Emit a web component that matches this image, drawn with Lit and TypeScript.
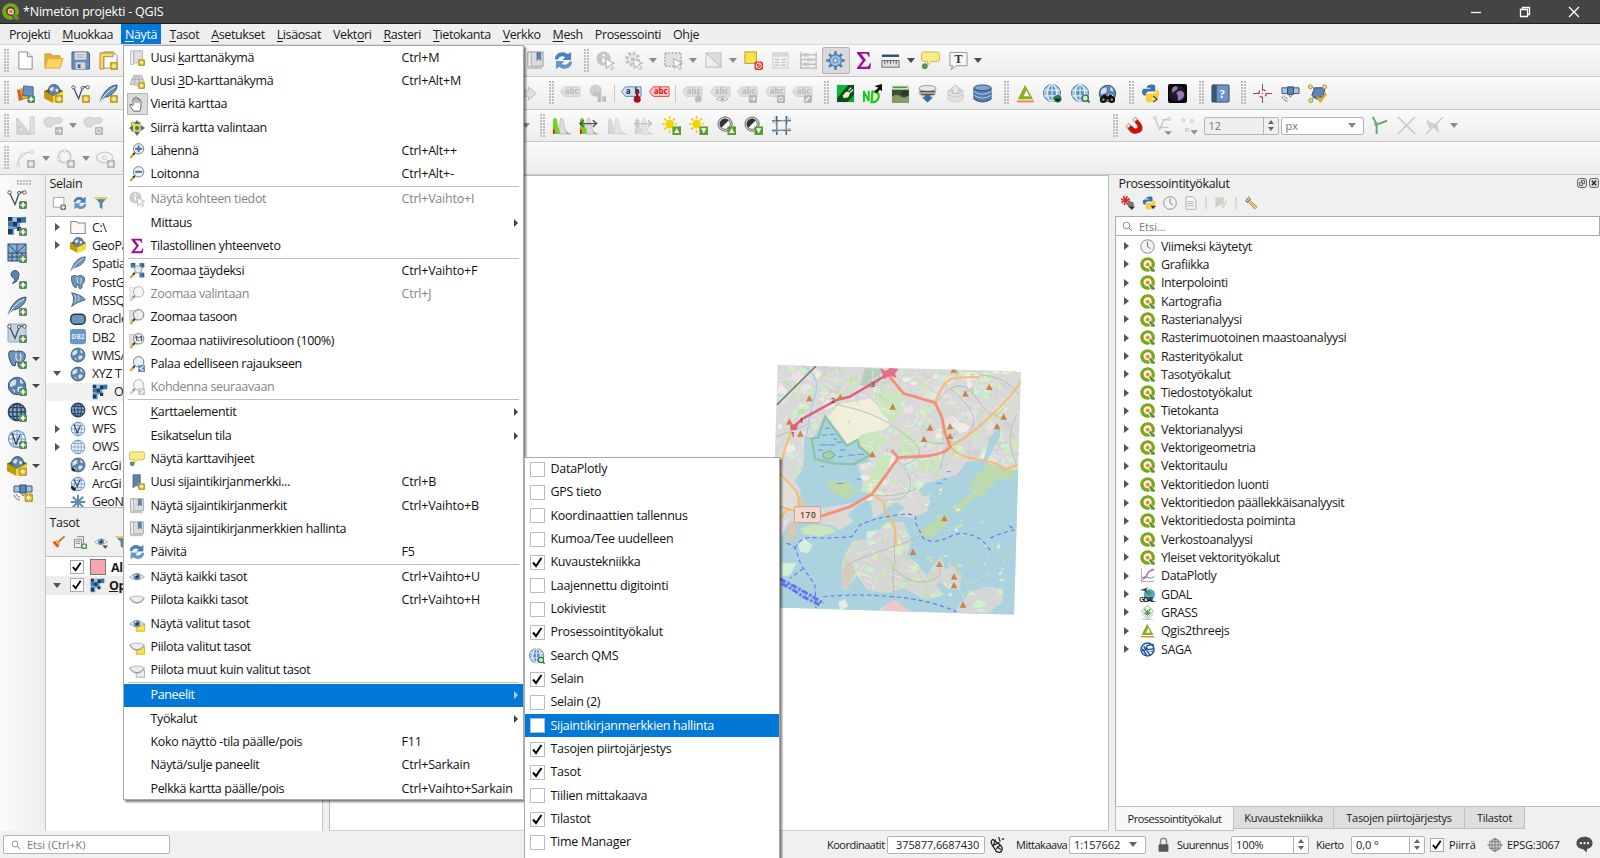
import { LitElement, html, svg, css, nothing } from "lit";
import { customElement, property } from "lit/decorators.js";
import { classMap } from "lit/directives/class-map.js";

/* ---------- shared icon fragments (20x20 grid) ---------- */
const plus = svg`<rect x="12" y="12" width="8" height="8" rx="1.5" fill="#5a8c5a"/><path d="M16 13.500v5M13.500 16h5" stroke="#fff" stroke-width="1.700"/>`;
const star = svg`<rect x="11.500" y="11.500" width="8.500" height="8.500" rx="1.500" fill="#c4a017"/><path d="M15.750 12.800v6M12.800 15.800h6M13.700 13.700l4.100 4.100M17.800 13.700l-4.100 4.100" stroke="#fff8d0" stroke-width="1"/>`;
const grayBadge = svg`<rect x="11.500" y="11.500" width="8.500" height="8.500" rx="1.200" fill="#8d8d8d"/>`;
const grayStar = svg`${grayBadge}<path d="M15.750 12.800v6M12.800 15.800h6M13.700 13.700l4.100 4.100M17.800 13.700l-4.100 4.100" stroke="#fff" stroke-width="1"/>`;
const drop = svg`<path d="M12 15h8l-4 4.500z" fill="#444"/>`;
const globeDark = svg`<circle cx="10" cy="10" r="8.700" fill="#5d83ad" stroke="#3a5878" stroke-width="1"/><path d="M3 7c2-3 5-4 6-3s-1 2 0 3-2 3-3 3-2 2-3 0zM11 11c2-1 5 0 5 1s-2 4-4 4-2-3-1-5zM13 3c2 1 3 3 3 5l-3-1zM5 13l3 1v3z" fill="#d5e2ee"/>`;
const globeGrid = svg`<circle cx="10" cy="10" r="8.500" fill="#eef4fa" stroke="#6b96c6" stroke-width="1.200"/><path d="M10 1.500v17M1.500 10h17M3 5.600h14M3 14.400h14" stroke="#6b96c6" stroke-width=".9"/><ellipse cx="10" cy="10" rx="4.400" ry="8.500" fill="none" stroke="#6b96c6" stroke-width=".9"/>`;
const globeNavy = svg`<circle cx="10" cy="10" r="8.500" fill="#87a9cc" stroke="#2a4664" stroke-width="1.600"/><path d="M10 1.500v17M1.500 10h17M3 5.600h14M3 14.400h14" stroke="#2a4664" stroke-width="1.400"/><ellipse cx="10" cy="10" rx="4.400" ry="8.500" fill="none" stroke="#2a4664" stroke-width="1.400"/>`;
const globeQms = svg`<circle cx="9.500" cy="9.500" r="9" fill="#a9c5de" stroke="#4f7ba8"/><ellipse cx="9.500" cy="9.500" rx="4.800" ry="8.800" fill="#5f92c6" stroke="#e9f1f8" stroke-width="1.400"/><path d="M9.500 1v17M1.500 6.500h16M1.500 12.500h16" stroke="#e9f1f8" stroke-width="1.100"/>`;
const lens = svg`<path d="M1.500 18.500l5-5" stroke="#d9a838" stroke-width="3"/><path d="M5 14.500l2.500-2.500" stroke="#333" stroke-width="2.200"/><circle cx="12" cy="7.300" r="6.500" fill="#e9eef2" fill-opacity=".92" stroke="#777" stroke-width="1.200"/>`;
const eye = svg`<path d="M.7 10Q10 1.500 19.300 10 10 17 .7 10z" fill="#e9e9e9" stroke="#9b9b9b"/><circle cx="10" cy="9.600" r="4.300" fill="#6689ad"/><circle cx="10" cy="9.600" r="2" fill="#17324f"/><circle cx="8.500" cy="8" r="1" fill="#fff"/>`;
const lid = svg`<path d="M1 7q9-4 18 0c0 4-5 7-9 7S1 11 1 7z" fill="#ededed" stroke="#a9a9a9"/><path d="M1 8q9 11 18 0" fill="none" stroke="#8f8f8f" stroke-width="1.200"/>`;
const box3d = svg`<path d="M0 7.500L10 3l10 4-9 5z" fill="#6b5a10"/><circle cx="10.500" cy="6.500" r="6" fill="#5d83ad" stroke="#2e4a69" stroke-width=".8"/><path d="M6 5c2-2.500 4.500-2 4.500-.5s-2 1.500-1 2.500-3.500 1-3.500-2zM12 5.500c2-1 4 0 3 2s-3 1-3-2z" fill="#d5e2ee"/><path d="M0 7.500l9.500 4.800V20L0 15z" fill="#c39a08"/><path d="M9.500 12.300L20 7.500v8L9.500 20z" fill="#f5d83a"/><path d="M0 7.500l9.500 4.800L20 7.500" fill="none" stroke="#8c7412" stroke-width=".8"/>`;
const vee = svg`<path d="M2.500 3.500L8 15.500 12 4.500Q14 2 17.500 3.500" fill="none" stroke="#41566b" stroke-width="1.400"/><circle cx="2.500" cy="3.500" r="1.700" fill="#fff" stroke="#555"/><circle cx="12" cy="4" r="1.500" fill="#fff" stroke="#555"/><circle cx="17.500" cy="3.500" r="1.700" fill="#fff" stroke="#555"/>`;
const feather = svg`<path d="M1 18.500C5 8 10 2 19 1c0 6-5 11-12 13" fill="#6d94bd" stroke="#2f4d6d" stroke-width="1"/><path d="M1 18.500C5 12 10 7 17 3" stroke="#dfeaf4" fill="none"/>`;
const elephant = svg`<path d="M2 3c3-2 6-1 7 0 2-2 8-1 9 2 1 4-1 7-3 8v4c-1 2-4 2-4 0v-4H9l-1 4-3-1C3 12 1 8 2 3z" fill="#6d94bd" stroke="#34506e"/><path d="M9 4v6l2 2M13 5c2 2 1 5 0 7" stroke="#e0eaf4" fill="none" stroke-width="1.100"/>`;
const mosaic = svg`<path d="M1 1h18v6h-6v6H7v6H1z" fill="#6d9fce"/><path d="M1 1h4.500v4H1zM10 2h4.500v4.500H10zM5.500 6H10v4.500H5.500zM1 13h4.500v5H1zM10 11h4v4h-4z" fill="#1c3c60"/><path d="M14.500 1H19v5h-4.500zM1 6h4.500v4H1z" fill="#3f6f9f"/><path d="M5.500 1.500h4V5h-4z" fill="#a9c8e4"/>`;
const python = svg`<path d="M9 1c4-1 6 0 6 2v5H8c-2 0-3 2-3 4H3c-3-2-2-7 0-7h7V4H6c0-2 1-3 3-3z" fill="#3a73a8"/><path d="M11 19c-4 1-6-1-6-3v-3c0-3 1-3 3-3h5c2 0 3-1 3-4h1c3 1 3 7 0 9h-6v1h4c0 2-1 3-4 3z" fill="#f7cf3d"/>`;
const satellite = svg`<path d="M1 4h6v6H1zM13 4h6v6h-6z" fill="#a9c3de" stroke="#3b5a7c"/><path d="M7 3h6v8H7z" fill="#5f88b3" stroke="#2e4a69"/><path d="M8 11l2 3 2-3M1 13c1 3 3 5 6 5M3 12c1 2 2 3 4 3" stroke="#777" fill="none"/>`;
const refresh = svg`<path d="M1 9C1 2 9-1 14.500 3.500L18 1v8.500H9l2.800-2.800C9 4.500 5.500 5.500 4 9z" fill="#4a82bd"/><path d="M19 11c0 7-8 10-13.500 5.500L2 19v-8.500h9l-2.800 2.800C11 15.500 14.500 14.500 16 11z" fill="#6596c8"/>`;
const sigma = svg`<path d="M3 1h13l.5 5h-1.300c-.5-2.500-1.500-3-3.500-3H7.500l5 6.500L7 16.500h6c2 0 3-1 3.700-3.500H18l-1 6H3v-1.200L9 10 3 2.200z" fill="#9b0f9b"/>`;
const bookmark = svg`<path d="M2 1h16v15H2z" fill="#dcdcdc" stroke="#9d9d9d"/><path d="M2 1h3.500v17H2z" fill="#efefef" stroke="#a5a5a5"/><path d="M2 16h15v3H2z" fill="#c4c4c4"/><path d="M11.500 1.500h4v8.500l-2-2-2 2z" fill="#5d83ad" stroke="#45648a" stroke-width=".6"/>`;
const bubble = svg`<path d="M3 1h14q2.500 0 2.500 2.500v5Q19.500 11 17 11h-6l-5 5 1-5H3Q.5 11 .5 8.500v-5Q.5 1 3 1z" fill="#f8ec84" stroke="#c7b64d"/><circle cx="4" cy="16" r="3" fill="#5b8f5b"/>`;
const abcTag = (fill: string, stroke: string, ink: string, txt = "abc") => svg`<path d="M-.5 8l4-5H20v10H3.500z" fill=${fill} stroke=${stroke}/><text x="4" y="11" font-size="8.500" font-weight="700" textLength="14.500" fill=${ink} font-family="Open Sans, sans-serif">${txt}</text>`;
const grayTag = abcTag("#d2d2ca", "#b4b4aa", "#8e8e86");
const triTool = svg`<path d="M2 16L9.500 1 18 16z" fill="#8cb020"/><path d="M8 13l3-6.500 3 6.500z" fill="#fff"/><path d="M1 18.300h18" stroke="#f08a3c" stroke-width="2"/>`;
const qlogo = svg`<path d="M10 .3a9.700 9.700 0 1 0 4 18.500l-3-3.800A5.400 5.400 0 1 1 15 12l3.300 3.200A9.700 9.700 0 0 0 10 .3z" fill="#7fa51b"/><path d="M11 12l3-.5 6 6-.5 2.300h-4z" fill="#589632"/><circle cx="10.300" cy="10" r="3.600" fill="#f9d9a8"/><circle cx="10.300" cy="10" r="2.100" fill="#ee7913"/>`;
const node = svg`<circle cx="17" cy="3" r="1.800" fill="#fff" stroke="#aaa"/>`;
const hist = (a: string, b: string) => svg`<path d="M1 19V4q4-6 5 5 2 8 4 10z" fill=${a}/><path d="M1 19v-6l2 2v4zM8 19v-4l3 4z" fill=${b}/><path d="M8 19Q8 1 10 2t3 10q2 6 7 7z" fill="#ddd" stroke="#b5b5b5" stroke-width=".8"/><path d="M15 19v-3q2 2.500 5 3z" fill=${a}/>`;
const sun = svg`<circle cx="8" cy="8.500" r="4.600" fill="#f2d600"/><path d="M8 0v2.500M0 8.500h2.500M2.300 2.800l2 2M13.700 2.800l-2 2M2.300 14.200l2-2M14 8.500h2M8 15v2.500" stroke="#eac400" stroke-width="1.600"/>`;
const contrast = svg`<circle cx="8.500" cy="8.500" r="7.500" fill="#ddd" stroke="#666"/><circle cx="8.500" cy="8.500" r="5.500" fill="#fff" stroke="#666"/><path d="M12.400 4.600A5.500 5.500 0 0 0 4.600 12.400z" fill="#333"/>`;
const upB = svg`<rect x="11" y="11" width="9" height="9" fill="#5a9e2c"/><path d="M15.500 12.500l2.700 5.500h-5.400z" fill="#fff"/>`;
const downB = svg`<rect x="11" y="11" width="9" height="9" fill="#5a9e2c"/><path d="M15.500 18.500l-2.700-5.500h5.400z" fill="#fff"/>`;
const blob = svg`<path d="M0 6c0-5 6-5 9-4s10-2 10 2-4 4-6 4-3 1-5 3-8 0-8-5z" fill="#c9c9c9" stroke="#aaa"/>`;
const clock = svg`<circle cx="10" cy="10" r="9" fill="#f3f3f3" stroke="#8a8a8a" stroke-width="1.300"/><path d="M10 3.500V10l4 3" fill="none" stroke="#6c6c6c" stroke-width="1.300"/>`;
const sel = svg`<path d="M1 2h17v14H1z" fill="#d6d6c6" stroke="#77776f" stroke-dasharray="2 1.500" stroke-width="1.600"/>`;
const cursor = svg`<path d="M10 8l9.500 5-4 1 3 4-2 1.500-3-4-2.500 3z" fill="#fff" stroke="#777"/>`;

const ICONS: Record<string, unknown> = {
  qgis: qlogo,
  page: svg`<path d="M3 1h9l5 5v13H3z" fill="#fff" stroke="#888"/><path d="M12 1v5h5" fill="#eee" stroke="#888"/>`,
  folder: svg`<path d="M1 18V3h6l2 2h8v4" fill="#e0b040" stroke="#c99b33"/><path d="M1 18L4 8h16l-3 10z" fill="#fcd45f" stroke="#dba93a"/>`,
  save: svg`<path d="M1 1h17l1.500 1.500V19H1z" fill="#6790bd" stroke="#46627f"/><path d="M4 1.500h12V9H4z" fill="#e7e7e7"/><path d="M5.500 4h9M5.500 6.500h9" stroke="#999"/><path d="M5 12h10v7H5z" fill="#d3d9df"/><path d="M7 14h3v4H7z" fill="#46627f"/>`,
  layout: svg`<path d="M5 1h10l4 4v13H5z" fill="#fff" stroke="#888"/><path d="M1 2h14v4H5v13H1z" fill="#f3d778" stroke="#b38e26"/>${star}`,
  layers: svg`<path d="M1 6l9-1 2 10-9 3z" fill="#d9632a"/><path d="M4 5l9-2 3 10-9 3z" fill="#eaa52f"/><path d="M8 2l10 1v10l-11-1z" fill="#6690c0" stroke="#44678f"/>${plus}`,
  geopack: svg`${box3d}${star}`,
  newshape: svg`${vee}${star}`,
  newspatial: svg`${feather}${star}`,
  ruler2: svg`<path d="M1 2l14 17H1zM4 10v6h5z" fill="#cfc8bc" stroke="#a09a90" fill-rule="evenodd"/><path d="M15 1h4v18h-4z" fill="#d6d6d6" stroke="#a9a9a9"/>`,
  blob: svg`${blob}${grayBadge}<path d="M13 15.700h5M16 13.500l2 2.200-2 2.200" stroke="#fff" fill="none"/>`,
  blobr: svg`${blob}${grayBadge}<circle cx="15.700" cy="15.700" r="2.300" fill="none" stroke="#fff"/>`,
  curve: svg`<path d="M2 18Q2 4 16 3" fill="none" stroke="#b5b5b5" stroke-width="1.500"/><circle cx="2.500" cy="17" r="1.700" fill="#fff" stroke="#aaa"/><circle cx="7" cy="6" r="1.700" fill="#fff" stroke="#aaa"/>${node}${grayStar}`,
  circ: svg`<circle cx="9" cy="8" r="6.500" fill="none" stroke="#b5b5b5" stroke-width="2"/><circle cx="9" cy="1.800" r="1.700" fill="#fff" stroke="#aaa"/><circle cx="3" cy="11" r="1.700" fill="#fff" stroke="#aaa"/>${grayStar}`,
  ell: svg`<ellipse cx="9" cy="9" rx="8.500" ry="5.500" fill="none" stroke="#b5b5b5" stroke-width="1.600"/><circle cx="9" cy="9" r="2" fill="none" stroke="#aaa"/>${grayStar}`,
  bookmark, refresh, sigma, bubble,
  ident: svg`<circle cx="8" cy="8" r="7.500" fill="#a9a9a9"/><path d="M8 3.500v2M8 7v5" stroke="#fff" stroke-width="2.200"/>${cursor}`,
  gearq: svg`<circle cx="9" cy="8.500" r="6.500" fill="none" stroke="#a5a5a5" stroke-width="3" stroke-dasharray="3 2"/><circle cx="9" cy="8.500" r="5" fill="#e4e4e4" stroke="#999"/><path d="M7.500 6l4 2.500-4 2.500z" fill="#999"/>${cursor}`,
  select: svg`${sel}${cursor}`,
  invsel: svg`<path d="M2 2v15h16z" fill="#ececec" stroke="#999"/><path d="M2 2h16v15z" fill="#cfccbc" stroke="#999"/>`,
  desel: svg`<rect x="1" y="1" width="12" height="12" fill="#fbe34c" stroke="#b29a1a"/><rect x="11" y="11" width="9" height="9" rx="2" fill="#d93434"/><circle cx="15.500" cy="15.500" r="2.800" fill="none" stroke="#fff"/><path d="M13.500 17.500l4-4" stroke="#fff"/>`,
  table: svg`<path d="M2 2h16v16H2z" fill="#f3f3f3" stroke="#ababab"/><path d="M2 2h16v4H2z" fill="#b9c2ca"/><path d="M4 9h5M4 12h5M4 15h5M11 9h5M11 12h5M11 15h5" stroke="#a5a5a5" stroke-width="1.500"/>`,
  abacus: svg`<path d="M2 1v18M18 1v18M1 18h18M2 4h16M2 9h16M2 14h16" stroke="#999" stroke-width="1.500"/><path d="M5 4h5M9 9h6M5 14h6" stroke="#b7a7a7" stroke-width="4" stroke-dasharray="2.300 .7"/>`,
  gear: svg`<g stroke="#4479b5" stroke-width="2.600"><path d="M10 .3v19.400M.3 10h19.400M3.200 3.200l13.600 13.600M16.800 3.200L3.200 16.800"/></g><circle cx="10" cy="10" r="6.200" fill="#9bbfe4" stroke="#4479b5" stroke-width="1.200"/><circle cx="10" cy="10" r="2.300" fill="#dcdcdc" stroke="#4479b5"/>`,
  measure: svg`<path d="M1 5h18" stroke="#224e84" stroke-width="2.500"/><rect x="1" y="10" width="18" height="7" fill="#e2e2e2" stroke="#666"/><path d="M4 10v4M7 10v3M10 10v4M13 10v3M16 10v4" stroke="#555"/>`,
  textnote: svg`<path d="M1 1.500h18v14H8l-6 4 2-4H1z" fill="#f6f9fb" stroke="#8a979f"/><text x="5.500" y="13" font-size="13" font-weight="700" fill="#333" font-family="Liberation Serif, serif">T</text>`,
  fwd: svg`<path d="M3 7h7V3l8 7-8 7v-4H3z" fill="#d2d2d2" stroke="#999"/>`,
  tag: grayTag,
  diag: svg`<circle cx="7" cy="7" r="6.500" fill="#b4b4aa"/><path d="M7 7l-4 5 6-.500z" fill="#8aa58a"/><path d="M9 9h4v10H9zM14 13h4v6h-4z" fill="#9f9f96"/>`,
  tagblue: svg`${abcTag("#cfe2f7", "#4a85c5", "#222", "ab")}<path d="M16 6v9" stroke="#a11" stroke-width="2.500"/><circle cx="16" cy="16" r="3.700" fill="#a31515"/>`,
  tagred: abcTag("#ffd0d0", "#e33", "#d11"),
  tagpin: svg`${grayTag}<path d="M16 7v8" stroke="#999" stroke-width="2"/><circle cx="16" cy="16" r="3.500" fill="#999"/>`,
  tageye: svg`${grayTag}<path d="M6 16q6-5 12 0-6 4-12 0z" fill="#eee" stroke="#888"/><circle cx="12" cy="16" r="1.700" fill="#888"/>`,
  tagmove: svg`${grayTag}${grayBadge}<path d="M13 15.700h5M16 13.500l2 2.200-2 2.200" stroke="#fff" fill="none"/>`,
  tagrot: svg`${grayTag}${grayBadge}<circle cx="15.700" cy="15.700" r="2" stroke="#fff" fill="none"/>`,
  tagedit: svg`${grayTag}${grayBadge}<path d="M13 18l4-4" stroke="#fff" stroke-width="1.600"/>`,
  plug: svg`<rect x="1" y="1" width="18" height="18" fill="#0a4a1c"/><path d="M1 1h12L1 15z" fill="#12b53a"/><path d="M12 19l7-8v8z" fill="#12a53a"/><path d="M7 12l4-4 4 1-2 5-5 1z" fill="#f3efc0"/><path d="M13 7l3-3M15 9l3-3" stroke="#eee" stroke-width="1.300"/>`,
  vd: svg`<path d="M1 7v12M1 8l5 10V7" stroke="#18c818" stroke-width="2" fill="none"/><path d="M10 8h3q4 1 3.500 5.500T11 19H9z" fill="#eaffea" stroke="#14d114" stroke-width="2.400"/><path d="M12 8l4-4-4-2 8-2v8l-2-2-4 4z" fill="#111"/>`,
  photo: svg`<rect x="1" y="2" width="18" height="17" fill="#3e5231"/><path d="M1 2h18v4H1z" fill="#cfe0cf"/><path d="M2 3.500h15" stroke="#2aa82a" stroke-width="1.500"/><path d="M1 13q6-3 9 0t9-1v8H1z" fill="#8a9a66"/><path d="M11 8q4-2 7 0v4h-7z" fill="#2b3b22"/>`,
  dbdown: svg`<path d="M1 4v7q9 6 18 0V4z" fill="#bdbdbd"/><ellipse cx="10" cy="4.500" rx="9" ry="3" fill="#e8e8e8" stroke="#999"/><path d="M2 8h16M3 11h14" stroke="#555" stroke-width="1.400"/><path d="M7 11h6v3h3l-6 5.500L4 14h3z" fill="#376a9e"/>`,
  dbup: svg`<path d="M2 7v9q8 6 16 0V7z" fill="#d6d6d6" stroke="#b4b4b4"/><path d="M2 11q8 5 16 0M2 7q8 5 16 0" stroke="#aaa" fill="none"/><path d="M7 10h6V6h3l-6-5-6 5h3z" fill="#ddd" stroke="#999"/>`,
  db: svg`<path d="M1 4v12q9 6 18 0V4z" fill="#4f7fb4" stroke="#2c4f78"/><ellipse cx="10" cy="4" rx="9" ry="3" fill="#7ea6d0" stroke="#2c4f78"/><path d="M1 8q9 5.500 18 0M1 12q9 5.500 18 0" stroke="#bdd2e8" fill="none"/>`,
  triTool,
  qmsadd: svg`${globeQms}<circle cx="15.500" cy="15.500" r="4" fill="#2d7d46"/><path d="M12 15.500h7l-3.500 3.500z" fill="#123"/>`,
  qms: svg`${globeQms}<circle cx="15" cy="15" r="3.300" fill="#d5e8d5" stroke="#2d7d46" stroke-width="1.500"/><path d="M17.500 17.500l2 2" stroke="#2d7d46" stroke-width="2"/>`,
  bino: svg`${globeDark}<path d="M6 11h2l1 2h2l1-2h2l4 5H2z" fill="#111"/><circle cx="5.500" cy="16.500" r="3.500" fill="#111"/><circle cx="14.500" cy="16.500" r="3.500" fill="#111"/><circle cx="5.500" cy="16.500" r="1.400" fill="#888"/><circle cx="14.500" cy="16.500" r="1.400" fill="#888"/>`,
  python: svg`${python}<path d="M13 13l4 3-4 3" fill="none" stroke="#444" stroke-width="1.300"/>`,
  earth: svg`<rect width="20" height="20" rx="2" fill="#08080c"/><circle cx="10" cy="10" r="8.500" fill="#1f1a2a"/><path d="M5 4c3-3 6-1 5 1s-4 2-4 4-3-2-1-5zM10 8c3-2 7 0 7 3s-2 5-5 6-1-3-2-5-2-2 0-4z" fill="#9a78b5"/>`,
  help: svg`<rect x="1" y="1" width="18" height="18" rx="1" fill="#6b95c5" stroke="#2d4a6b"/><path d="M1 1h5v18H1z" fill="#3a5672"/><text x="8.500" y="14.500" font-size="13" font-weight="700" fill="#fff" font-family="Liberation Serif, serif">?</text>`,
  cross: svg`<path d="M10 0v7M10 13v7M0 10h7M13 10h7" stroke="#555"/><circle cx="10" cy="10" r="4" fill="none" stroke="#c33" stroke-width="1.300" stroke-dasharray="3.100 3.100"/><circle cx="10" cy="10" r=".8" fill="#c33"/>`,
  sat: satellite,
  poly: svg`<path d="M7 4l11 0-2 9-7 3-5-4z" fill="#5f88b3" stroke="#2e4a69"/><path d="M2 2l5 3M3 18l4-5" stroke="#555"/><circle cx="2.500" cy="3" r="2.200" fill="#f5dc3c" stroke="#997"/><circle cx="17.500" cy="3" r="2.200" fill="#f5dc3c" stroke="#997"/><circle cx="3" cy="17.500" r="2.200" fill="#f5dc3c" stroke="#997"/><path d="M10 14l3 4 6-8" fill="none" stroke="#dba51c" stroke-width="2.500"/>`,
  hist: hist("#6fd32a", "#e02020"),
  histx: svg`${hist("#6fd32a", "#e02020")}<path d="M1 8h17M14.500 4.500l4 3.500-4 3.500M5 4.500L1 8l4 3.500" fill="none" stroke="#555" stroke-width="1.500"/>`,
  histg: hist("#c6c6c0", "#b5b5b0"),
  histgx: svg`${hist("#c6c6c0", "#b5b5b0")}<path d="M1 8h17M14.500 4.500l4 3.500-4 3.500M5 4.500L1 8l4 3.500" fill="none" stroke="#999" stroke-width="1.500"/>`,
  sunup: svg`${sun}${upB}`, sundn: svg`${sun}${downB}`,
  conup: svg`${contrast}${upB}`, condn: svg`${contrast}${downB}`,
  grid: svg`<path d="M5 0v20M15 0v20M0 5h20M0 15h20" stroke="#444" stroke-width="1.300"/><path d="M3 0l3 20M17 0l-3 20M0 17l20-4M0 7l20-4" stroke="#8ab0cf" stroke-width=".9"/>`,
  magnet: svg`<path d="M4 8l6 5q4 1 3-3L8 4l3-3 6 7q4 8-3 10-4 2-8-1L1 11z" fill="#cf1010"/><path d="M1 11l3-3 2 2-3 3zM8 4l3-3 2 2.300-3 3z" fill="#eee" stroke="#888" stroke-width=".7"/>`,
  snapv: svg`<path d="M2 2l5 12 5-11M10 4h8M8 12h8" stroke="#aaa" fill="none" stroke-width="1.500"/><circle cx="2" cy="2" r="1.700" fill="#ddd" stroke="#aaa"/><circle cx="17" cy="3" r="1.700" fill="#ddd" stroke="#aaa"/><path d="M12 16h8l-4 4z" fill="#444"/>`,
  snapd: svg`<path d="M2 3h3v3H2zM11 4h3v3h-3zM6 13h3v3H6z" fill="#eee" stroke="#aaa"/><path d="M11 15h8l-4 4.500z" fill="#444"/>`,
  topo: svg`<path d="M3 1l4 8v10" stroke="#5cab62" fill="none" stroke-width="2"/><path d="M7 9l11-4" stroke="#5cab62" stroke-width="2"/><circle cx="6.500" cy="8.500" r="2.200" fill="#999"/>`,
  xx: svg`<path d="M1 1l18 18M19 1L1 19" stroke="#a5a5a5" stroke-width="1.500"/>`,
  xtrace: svg`<path d="M19 1L1 19" stroke="#aaa" stroke-width="1.500"/><path d="M1 3l6 4q3 2 6 0l2 12-5-6H4z" fill="#bbbbaa"/>`,
  addvec: svg`${vee}${plus}`, addras: svg`${mosaic}${plus}`,
  addmesh: svg`<rect x="1" y="1" width="18" height="17" fill="#86acd4" stroke="#2e4a69"/><path d="M1 10h18M10 1v17M1 1l9 9L19 1M5 10v8M15 10v8M1 14h18" stroke="#2e4a69" fill="none"/>${plus}`,
  addcsv: svg`<path d="M4 5.500a4 4 0 1 1 7.500 2q0 5-6 7 3-3 2-5-3-1-3.500-4z" fill="#5d83ad" stroke="#34506e"/>${plus}`,
  addfeather: svg`${feather}${plus}`,
  addvirt: svg`<rect x="1" y="1" width="18" height="18" rx="1" fill="#c3d3e2" stroke="#8ea5bb"/>${vee}${plus}`,
  addpg: svg`${elephant}${plus}`, addwms: svg`${globeDark}${plus}`, addwcs: svg`${globeNavy}${plus}`,
  addwfs: svg`${globeGrid}<path d="M5 4l4 11 4-9" fill="none" stroke="#345" stroke-width="1.300"/>${plus}`,
  addsat: svg`${satellite}${star}`,
  newwin: svg`<path d="M2 2h15v14H2z" fill="#fff" stroke="#888"/>${plus}`,
  filter: svg`<path d="M1 2h18l-7 8v9l-4-3v-6z" fill="#5d83ad"/><path d="M1 2h18v2.500H1z" fill="#f2d444"/>`,
  collapse: svg`<path d="M3 1v17h4M3 9h4" fill="none" stroke="#888"/><path d="M8 3h10v5H8zM8 12h10v5H8z" fill="#f0a030"/>`,
  dir: svg`<path d="M1 18V3h7l2 2h9v13z" fill="#fafafa" stroke="#888" stroke-width="1.300"/>`,
  box3d, feather, elephant, globeDark, globeGrid, globeNavy, mosaic,
  mssql: svg`<path d="M2 1q14 3 17 9Q9 12 2 18q5-9 0-17z" fill="#6d94bd" stroke="#34506e"/><path d="M5 3q5 7 0 11M10 4q3 5 0 8" stroke="#dbe6f1" fill="none"/>`,
  oracle: svg`<rect x="1" y="4" width="18" height="12.500" rx="5" fill="#6d94bd" stroke="#223c58" stroke-width="1.800"/>`,
  db2: svg`<rect x="0" y="0" width="20" height="19" rx="3" fill="#6a97c8"/><text x="2" y="12.500" font-size="8" font-weight="700" fill="#e8f0f8" textLength="16" font-family="Open Sans, sans-serif">DB2</text>`,
  wfs: svg`${globeGrid}<path d="M5 4l4 11 4-9" fill="none" stroke="#345" stroke-width="1.300"/>`,
  arc: svg`${globeDark}<path d="M1 13l3-1 1 3 3-1-2 5-4-2z" fill="#223" stroke="#eee" stroke-width=".5"/>`,
  arcf: svg`${globeGrid}<path d="M5 4l4 9 4-9" fill="none" stroke="#345" stroke-width="1.300"/><path d="M1 13l3-1 1 3 3-1-2 5-4-2z" fill="#223"/>`,
  geonode: svg`<path d="M10 1v18M1 10h18M3.500 3.500l13 13M16.500 3.500l-13 13" stroke="#5d8bb8" stroke-width="2.400"/>`,
  brush: svg`<path d="M1 10l6-3 5 5-4 6q-5-2-7-8z" fill="#f0b03c"/><path d="M1 10l3-1 6 7-2 2z" fill="#d94b2b"/><path d="M9 10l9-8" stroke="#b07a3a" stroke-width="2.500"/>`,
  group: svg`<path d="M2 6h10v12H2zM6 2h9v10M4 9h6M4 12h6" fill="none" stroke="#777" stroke-width="1.200"/>${plus}`,
  eyedrop: svg`${eye}${drop}`,
  newmap: svg`<path d="M2 1h4v17H2z" fill="#f0f0f0" stroke="#aaa"/><path d="M6 1h11v15H6z" fill="#dedede" stroke="#aaa"/>${star}`,
  new3d: svg`<path d="M6 3h10l3 9-8 4-10-2z" fill="#d4d4d4" stroke="#aaa"/><path d="M3 8h14M9 3l-3 12M12 3l1 10" stroke="#aaa" fill="none"/>${star}`,
  hand: svg`<path d="M6 19q-4-5-5-8 1-2 4 1V4q1-2 2.500 0V2q1.300-2 2.500 0v1.500q1.300-1.500 2.500 0v1.700q1.700-1.200 2.500.5V14l-1.500 5z" fill="#fff" stroke="#555" stroke-width="1.100"/><path d="M7.500 4v5M10 3.500V9M12.500 4.500V9" stroke="#555"/>`,
  pansel: svg`<path d="M3 3h11v11H3z" fill="#f5dc3c" stroke="#a98f12"/><path d="M10 0l3.500 5h-7zM10 20l3.500-5h-7zM0 10l5-3.500v7zM20 10l-5-3.500v7z" fill="#3f6da0"/><circle cx="10" cy="10" r="2.500" fill="#3f6da0"/>`,
  zin: svg`${lens}<path d="M12 3v8.600M7.700 7.300h8.600" stroke="#4b7cb0" stroke-width="2.600"/>`,
  zout: svg`${lens}<path d="M7.700 7.300h8.600" stroke="#4b7cb0" stroke-width="2.600"/>`,
  zfull: svg`<path d="M2 0h6v6H2zM13 0h6v6h-6zM13 12h6v6h-6z" fill="#4b7cb0"/><path d="M1.500 18.500l5-5" stroke="#d9a838" stroke-width="3"/><path d="M5 14.500l2.500-2.500" stroke="#333" stroke-width="2.200"/><circle cx="11.500" cy="8" r="4.700" fill="#e3e9ee" stroke="#888"/><path d="M2 0h5v4zM19 0v5l-4-2zM19 18v-5l-3 1z" fill="#2f5f94"/>`,
  zlayer: svg`<rect x="1" y="2" width="9" height="12" fill="#e3e3e3" stroke="#bbb"/>${lens}`,
  znat: svg`<rect x="1" y="2" width="9" height="12" fill="#e3e3e3" stroke="#bbb"/>${lens}<text x="6.800" y="10.300" font-size="8.500" font-weight="700" textLength="10.500" fill="#333" font-family="Open Sans, sans-serif">1:1</text>`,
  zprev: svg`${lens}<rect x="11.500" y="11.500" width="8.500" height="8.500" fill="#5d8bb8"/><path d="M18 13l-4 2.700 4 2.700" fill="none" stroke="#fff" stroke-width="1.400"/>`,
  znext: svg`${lens}<rect x="11.500" y="11.500" width="8.500" height="8.500" fill="#999"/><path d="M14 13l4 2.700-4 2.700" fill="none" stroke="#fff" stroke-width="1.400"/>`,
  newbm: svg`<path d="M5 1h9v17l-4.500-4L5 17z" fill="#5d83ad" stroke="#3f5e80"/>${star}`,
  eye, lid,
  eyesel: svg`<path d="M9 10h10.500v9H9z" fill="#fbe34c" stroke="#c9a800"/>${eye}`,
  lidsel: svg`<path d="M9 10h10.500v9H9z" fill="#fbe34c" stroke="#c9a800"/>${lid}`,
  lidoth: svg`<path d="M9 10h10.500v9H9z" fill="#eee" stroke="#999"/>${lid}`,
  clock,
  models: svg`<circle cx="6.500" cy="6.500" r="5" fill="none" stroke="#c22" stroke-width="3" stroke-dasharray="2.400 1.500"/><circle cx="6.500" cy="6.500" r="3.500" fill="#d22"/><circle cx="14" cy="12.500" r="4.500" fill="#777"/><path d="M11 15h9l-4.500 5z" fill="#333"/>`,
  pyd: svg`${python}<path d="M12 14h8l-4 5z" fill="#333"/>`,
  doc: svg`<path d="M3 1h9l5 5v13H3z" fill="#f8f8f8" stroke="#999"/><path d="M5 8h9M5 11h9M5 14h9" stroke="#999"/>`,
  inplace: svg`<path d="M2 2h12v10H9l-3 3H2z" fill="#d0d0c6"/><path d="M10 17l7-11 2 2-6 10z" fill="#d6d6cc"/>`,
  wrench: svg`<path d="M3 3l4 4M2 6l3 3 4-4-3-4" stroke="#888" stroke-width="1.800" fill="none"/><path d="M8 8l9.500 9.500" stroke="#8b7322" stroke-width="4.600"/><path d="M8 8l9.500 9.500" stroke="#ecd06a" stroke-width="3"/>`,
  plot: svg`<path d="M2 1v17h17" stroke="#888" fill="none" stroke-width="1.300" stroke-dasharray="2 1"/><path d="M3 13q5 0 7-5t9-6" stroke="#c54fa5" stroke-width="1.800" fill="none"/><path d="M3 16q6-5 9-3t7-2" stroke="#5a8faa" fill="none" stroke-width="1.300"/>`,
  gdal: svg`<circle cx="12.500" cy="10" r="7.500" fill="#4fa9c9"/><path d="M9 6q4-2 6 1t-4 4z" fill="#4f9a3c"/><path d="M0 4l7-2 4-2-3 4 2 5-4-4z" fill="#333"/><text x="-1" y="20" font-size="9" font-weight="700" textLength="21" fill="#111" font-family="Liberation Sans, sans-serif">GDAL</text>`,
  grass: svg`<path d="M10 0l8 8-8 9-8-9z" fill="#f4f4f4" stroke="#999"/><path d="M2 12l8 7 8-7M3 19h14" fill="none" stroke="#aaa"/><path d="M10 14V7M10 11L6 5M10 11l4-6M10 13l-4-3M10 13l4-3" stroke="#2f9a3c" stroke-width="1.500"/>`,
  saga: svg`<circle cx="10" cy="10" r="8.700" fill="#fff" stroke="#1c559a" stroke-width="1.900"/><path d="M19 4Q10 3 8.500 7q0 3 9 6M2 11.500L19 9M5 6l9 12M3 9l6 9" stroke="#1c559a" stroke-width="2" fill="none"/>`,
  search: svg`<circle cx="8" cy="8" r="6" fill="none" stroke="#777" stroke-width="1.500"/><path d="M12.500 12.500L18 18" stroke="#777" stroke-width="1.800"/>`,
  mouse: svg`<path d="M5 3l8 6q5 4 3 8t-7 1L4 10q-3-5 1-7z" fill="#e9e9e9" stroke="#222" stroke-width="1.600"/><path d="M6 10l7-3M8 3l-3 9M12 0l2 6M16 3l3-1M10 12l5 4M9 15l5-5" stroke="#222" stroke-width="1.500"/>`,
  lock: svg`<path d="M6 10V6q0-4.500 4-4.500T14 6v4" fill="none" stroke="#8a8a8a" stroke-width="2"/><rect x="3.500" y="9.500" width="13" height="10" rx="1" fill="#555"/>`,
  crs: svg`<circle cx="10" cy="10" r="7.500" fill="#ddd" stroke="#777"/><path d="M10 1v18M.5 10h19M3 6h14M3 14h14" stroke="#777" stroke-width="1.200"/><ellipse cx="10" cy="10" rx="4" ry="7.500" fill="none" stroke="#777" stroke-width="1.200"/>`,
  msg: svg`<path d="M10 1c5.500 0 9.500 3 9.500 7.500S15 15 13 15.200l-.5 4.300-4-4C3.500 15 .5 12.500.5 8.500S4.500 1 10 1z" fill="#4c4c4c"/><circle cx="5.800" cy="8.500" r="1.300" fill="#fff"/><circle cx="10" cy="8.500" r="1.300" fill="#fff"/><circle cx="14.200" cy="8.500" r="1.300" fill="#fff"/>`,
};

const icon = (name: string, size = 20, cls = "") => svg`<svg class=${"ic " + cls} width=${size} height=${size} viewBox="0 0 20 20">${ICONS[name] ?? nothing}</svg>`;

const shared = css`
  * { box-sizing: border-box; }
  .ic { display: block; flex: none; overflow: visible; letter-spacing: 0; }
  .off { opacity: .58; filter: grayscale(.85); }
  u { text-decoration-thickness: 1px; text-underline-offset: 2px; }
`;

/* "a_bc" underlines the letter that follows the underscore */
const mnemonic = (s: string) => {
  const i = s.indexOf("_");
  return i < 0 ? html`${s}` : html`${s.slice(0, i)}<u>${s[i + 1]}</u>${s.slice(i + 2)}`;
};

/* ---------- toolbars ---------- */
@customElement("tool-row")
class ToolRow extends LitElement {
  @property() items = "";
  static styles = [shared, css`
    :host { display: flex; align-items: center; height: 100%; flex: none; }
    .slot { width: 27.500px; display: flex; justify-content: center; align-items: center; flex: none; }
    .press { height: 27px; background: #dadada; border: 1px solid #b3b3b3; border-radius: 2px; }
    .drop { width: 12.500px; display: flex; justify-content: center; flex: none; }
    .drop i { border: 4px solid transparent; border-top: 5px solid #4a4a4a; border-bottom: 0; }
    .drop.pale i { border-top-color: #8c8c8c; }
    .handle { width: 15px; height: 24px; padding-left: 7px; flex: none; }
    .handle::before { content: ""; display: block; width: 5px; height: 24px; background: radial-gradient(circle at 1px 1px, #bdbdbd .8px, transparent 1px) 0 0 / 3px 3px; }
    .handle.first { width: 12px; padding-left: 4px; }
    .sep { width: 6px; height: 17px; flex: none; border-left: 1px solid #c8c8c8; margin-left: 2px; margin-right: -2px; }
  `];
  render() {
    return this.items.split(" ").filter(Boolean).map((k) => {
      if (k === "||") return html`<div class="handle first"></div>`;
      if (k === "|") return html`<div class="handle"></div>`;
      if (k === "/") return html`<div class="sep"></div>`;
      if (k === "v" || k === "w") return html`<div class=${classMap({ drop: true, pale: k === "w" })}><i></i></div>`;
      const press = k.startsWith("*"), off = k.startsWith("-");
      const name = press || off ? k.slice(1) : k;
      return html`<div class=${classMap({ slot: true, press })}>${icon(name, 19, off ? "off" : "")}</div>`;
    });
  }
}

/* ---------- menus ---------- */
type Item = { i?: string; t: string; k?: string; sub?: boolean; off?: boolean; hot?: boolean; press?: boolean; check?: boolean } | null;
const m = (i: string, t: string, k = "", o: object = {}): Item => ({ i, t, k, ...o });
const VIEW: Item[] = [
  m("newmap", "Uusi _karttanäkymä", "Ctrl+M"), m("new3d", "Uusi _3D-karttanäkymä", "Ctrl+Alt+M"),
  m("hand", "Vieritä karttaa", "", { press: true }), m("pansel", "Siirrä kartta valintaan"),
  m("zin", "Lähennä", "Ctrl+Alt++"), m("zout", "Loitonna", "Ctrl+Alt+-"), null,
  m("ident", "Näytä kohteen tiedot", "Ctrl+Vaihto+I", { off: true }), m("", "Mittaus", "", { sub: true }), m("sigma", "Tilastollinen yhteenveto"), null,
  m("zfull", "Zoomaa _täydeksi", "Ctrl+Vaihto+F"), m("zlayer", "Zoomaa valintaan", "Ctrl+J", { off: true }), m("zlayer", "Zoomaa tasoon"),
  m("znat", "Zoomaa natiiviresolutioon (100%)"), m("zprev", "Palaa edelliseen rajaukseen"), m("znext", "Kohdenna seuraavaan", "", { off: true }), null,
  m("", "_Karttaelementit", "", { sub: true }), m("", "Esikatselun tila", "", { sub: true }), m("bubble", "Näytä karttavihjeet"),
  m("newbm", "Uusi sijaintikirjanmerkki...", "Ctrl+B"), m("bookmark", "Näytä sijaintikirjanmerkit", "Ctrl+Vaihto+B"),
  m("bookmark", "Näytä sijaintikirjanmerkkien hallinta"), m("refresh", "Päivitä", "F5"), null,
  m("eye", "Näytä kaikki tasot", "Ctrl+Vaihto+U"), m("lid", "Piilota kaikki tasot", "Ctrl+Vaihto+H"), m("eyesel", "Näytä valitut tasot"),
  m("lidsel", "Piilota valitut tasot"), m("lidoth", "Piilota muut kuin valitut tasot"), null,
  m("", "Paneelit", "", { sub: true, hot: true }), m("", "Työkalut", "", { sub: true }), m("", "Koko näyttö -tila päälle/pois", "F11"),
  m("", "Näytä/sulje paneelit", "Ctrl+Sarkain"), m("", "Pelkkä kartta päälle/pois", "Ctrl+Vaihto+Sarkain"),
];
const PANELS: Item[] = ["DataPlotly", "GPS tieto", "Koordinaattien tallennus", "Kumoa/Tee uudelleen", "+Kuvaustekniikka", "Laajennettu digitointi", "Lokiviestit", "+Prosessointityökalut", "@Search QMS", "+Selain", "Selain (2)", "!Sijaintikirjanmerkkien hallinta", "+Tasojen piirtojärjestys", "+Tasot", "Tiilien mittakaava", "+Tilastot", "Time Manager", " "]
  .map((s) => ({ i: s[0] === "@" ? "qms" : "", t: s.replace(/^[+@!]/, ""), check: s[0] === "+", hot: s[0] === "!" }));

@customElement("drop-menu")
class DropMenu extends LitElement {
  @property({ attribute: false }) items: Item[] = [];
  @property({ type: Boolean }) checks = false;
  static styles = [shared, css`
    :host { display: block; background: #fff; border: 1px solid #a9a9a9; box-shadow: 2px 2px 2px rgba(0,0,0,.5); font-size: 12.500px; letter-spacing: -.35px; color: #111; }
    .row { display: grid; grid-template-columns: 27px 251px 1fr 8px; align-items: center; height: 23.330px; }
    .checks .row { grid-template-columns: 26px 1fr; }
    .checks { letter-spacing: -.28px; }
    .key { letter-spacing: -.22px; }
    .icon { width: 21px; height: 22px; margin-left: 3px; display: grid; place-items: center; }
    .checks .icon { margin-left: 2px; }
    .press { background: #dcdcdc; border: 1px solid #b5b5b5; }
    .dis { color: #858585; }
    .hot { background: #0078d7; color: #fff; }
    .arr { border: 4px solid transparent; border-left: 4.500px solid #444; border-right: 0; width: 0; margin-left: -.5px; }
    .hot .arr { border-left-color: #a9d4f7; }
    .line { height: 1.560px; margin: 0 4px; border-top: 1px solid #bdbdbd; }
    .box { width: 15px; height: 15px; border: 1px solid #bcbcbc; background: #fff; display: block; }
    span { white-space: nowrap; margin-top: -1px; }
  `];
  render() {
    return html`<div class=${this.checks ? "checks" : ""}>${this.items.map((it) => it === null ? html`<div class="line"></div>` : html`
      <div class=${classMap({ row: true, dis: !!it.off, hot: !!it.hot })}>
        <div class=${classMap({ icon: true, press: !!it.press })}>${it.i ? icon(it.i, 16, it.off ? "off" : "")
          : this.checks ? html`<svg class="box" viewBox="0 0 13 13">${it.check ? svg`<path d="M2 6.500L5 10 10.500 2" fill="none" stroke="#000" stroke-width="2"/>` : nothing}</svg>` : nothing}</div>
        <span>${mnemonic(it.t)}</span>
        ${this.checks ? nothing : html`<span class="key">${it.k}</span>${it.sub ? html`<i class="arr"></i>` : nothing}`}
      </div>`)}</div>`;
  }
}

/* ---------- map canvas ---------- */
const rand = (seed: number) => () => ((seed = (seed * 16807) % 2147483647) / 2147483647);
const scatter = (seed: number, n: number, x: number, y: number, w: number, h: number, colors: string[], size: number) => {
  const r = rand(seed);
  return Array.from({ length: n }, () => {
    const cx = x + r() * w, cy = y + r() * h, a = size * (0.4 + r()), b = size * (0.3 + r() * 0.7);
    const pts = Array.from({ length: 7 }, (_, i) => {
      const t = (i / 7) * 6.283, k = 0.5 + r() * 0.7;
      return `${(cx + Math.cos(t) * a * k).toFixed(1)},${(cy + Math.sin(t) * b * k).toFixed(1)}`;
    }).join(" ");
    return svg`<polygon points=${pts} fill=${colors[Math.floor(r() * colors.length)]}/>`;
  });
};
const streets = (seed: number, n: number, x: number, y: number, w: number, h: number, ink = "#f1f1ee") => {
  const r = rand(seed);
  const d = Array.from({ length: n }, () => `M${(x + r() * w).toFixed(0)} ${(y + r() * h).toFixed(0)}q${(r() * 40 - 20).toFixed(0)} ${(r() * 40 - 20).toFixed(0)} ${(r() * 80 - 40).toFixed(0)} ${(r() * 80 - 40).toFixed(0)}`).join("");
  return svg`<path d=${d} fill="none" stroke=${ink} stroke-width="1.800"/>`;
};
const PEAKS = [[118,130],[211,126],[368,155],[58,200],[91,236],[480,218],[540,214],[540,243],[462,252],[586,116],[658,96],[701,185],[681,214],[307,298],[523,490],[429,591],[508,627],[552,665],[552,691],[579,749],[551,44]];

@customElement("map-sheet")
class MapSheet extends LitElement {
  static styles = css`:host { display: block; letter-spacing: 0; } svg { display: block; }`;
  render() {
    const G = ["#cdebb8", "#c3dfb4", "#c9f2cf", "#d3f0c4"];
    return html`<svg width="260" height="265" viewBox="0 0 780 795">
      <defs>
        <clipPath id="q"><path d="M23 30L753 49 732 779 0 757z"/></clipPath>
        <clipPath id="isl"><path d="M215 620L245 560 300 550 350 500 400 500 425 560 410 600 440 625 470 660 515 600 525 650 500 690 520 720 470 735 400 700 350 715 290 705 260 660 230 705 215 700zM330 760L370 735 415 765 430 790 340 790zM500 670L545 630 575 660 570 705 530 700zM560 760L600 710 650 695 700 700 700 740 650 779 560 770z"/></clipPath>
      </defs>
      <g clip-path="url(#q)">
        <rect width="780" height="795" fill="#d9d9d9"/>
        ${scatter(7, 90, 20, 30, 720, 330, ["#efece6", "#e6e3dd", "#d2d2d2", "#e9e0e6"], 20)}
        ${scatter(21, 260, 20, 30, 720, 400, G, 12)}
        <path d="M285 40L335 42 325 90 300 100 270 90z" fill="#b4d0bd"/>
        <path d="M205 150L300 130 340 170 360 210 300 250 240 275 175 185z" fill="#f1efd9"/>
        <path d="M310 115L375 105 395 170 370 205 330 170zM395 215L440 260 440 310 385 300zM440 320L520 300 500 350 445 345zM270 240L330 225 350 260 310 300 265 270z" fill="#cbe6bd"/>
        ${streets(5, 220, 20, 30, 720, 430)}${streets(6, 60, 20, 30, 720, 430, "#c6c4c4")}
        <g fill="#aad3df">
          <path d="M105 240L130 250 165 183 225 270 290 295 300 320 262 330 275 360 280 400 300 415 270 440 210 450 150 460 95 470 90 400 75 375 100 340z"/>
          <path d="M20 530L60 500 110 500 180 510 230 480 265 450 300 430 330 470 380 440 430 480 460 470 480 445 445 405 470 385 560 360 590 320 640 315 660 250 690 210 690 245 650 320 690 350 745 345 740 795 0 795V590z"/>
        </g>
        <path d="M98 30Q150 65 138 110 120 170 110 240" fill="none" stroke="#aad3df" stroke-width="5"/>
        <path d="M25 330L80 400 78 470 30 470z" fill="#e2dfd8"/><path d="M85 420L110 440 105 475 85 475zM50 510L90 490 80 540 50 570z" fill="#d0cab8"/><path d="M30 500L60 490 35 545z" fill="#e6dbe6"/>
        <path d="M600 400Q600 370 660 325L735 345 735 370 680 375 630 430zM550 455L600 415 640 405 600 440 560 480zM440 530L530 475 535 505 480 550zM175 380L220 375 265 405 230 432 180 410z" fill="#bcdaae"/>
        <path d="M160 470L220 460 250 500 210 525 160 500zM440 430L480 420 470 470 430 490 380 480zM300 430L340 420 345 470 310 490z" fill="#d9d9d6"/>
        <path d="M92 520L130 508 180 515 200 530 150 545 100 538zM270 410L300 350 330 300 365 300 350 350 310 415z" fill="#cbe6bd"/>
        ${scatter(41, 24, 285, 320, 90, 120, ["#f0ede7", "#dcdcdc", "#d8f0cc"], 10)}
        <path d="M85 570L100 550 128 570 115 595 90 590zM290 530L325 525 325 555 290 555zM35 625L80 625 60 660 35 665z" fill="#d5f0d8"/>
        <g clip-path="url(#isl)"><rect y="480" width="780" height="320" fill="#d6d6d4"/>${scatter(33, 130, 210, 500, 500, 290, G, 14)}${streets(12, 60, 210, 500, 350, 280)}</g>
        <path d="M218 640L245 620 258 650 235 700 215 700z" fill="#d4cdbf"/><path d="M345 750L375 735 415 765 400 790 345 770z" fill="#ecc9c9"/>
        ${scatter(99, 46, 400, 540, 320, 190, ["#c6e3b4", "#dcead4", "#bcdaae"], 7)}
        ${scatter(57, 18, 470, 400, 180, 130, ["#c6e3b4", "#eceae4"], 8)}
        <path d="M205 742L225 732 235 755 210 765z" fill="#eceae4"/>
        <path d="M125 250L145 248 165 185 230 272 262 255 268 275 300 300 250 328 190 325 135 312z" fill="#a9d2dc" stroke="#8dc4a5" stroke-width="7"/>
        <path d="M160 295L180 287 195 300 180 313 160 308z" fill="#a8d3a8" stroke="#7eb894" stroke-width="4"/>
        <path d="M155 240h16M180 238h14M150 270h22M200 262h18M210 285h16M145 285h14M175 270h20M235 300h20M205 305h14M262 298h20M190 252h12M152 335h10M200 385h20M260 372h14M165 220h14M500 385h14M530 350h12M595 310h18M520 372h10" stroke="#4ba0e8" stroke-width="3"/>
        <g fill="none" stroke="#bbb7b7" stroke-width="2.600">
          <path d="M205 150Q280 165 330 190T430 260 400 330M20 245L110 210M500 140Q570 50 620 130T700 160M540 100Q640 180 600 230T470 260M375 630Q370 560 375 510M230 630Q290 600 370 575T450 540M370 640Q420 690 470 680T510 640M375 735Q365 680 370 630M300 420Q380 430 440 400M630 60Q700 60 750 120M385 320Q430 360 420 400T340 435M510 340Q530 260 560 230M740 180Q700 250 740 330"/>
        </g>
        <path d="M138 33L20 150" stroke="#777" stroke-width="5"/>
        <g fill="none" stroke="#f8bc71" stroke-width="6">
          <path d="M497 140Q520 70 560 68T628 66M753 75Q740 110 660 185T541 273Q560 305 630 315T700 345L742 330M30 355L80 410Q90 440 85 470M30 455L75 468M30 490L55 460M66 225Q40 290 32 330M310 420L340 440 345 470Q380 500 378 575"/>
        </g>
        <g fill="none" stroke="#f58f77" stroke-width="8.500" stroke-linejoin="round">
          <path d="M355 60L400 115 495 143 515 185 525 235 541 275Q530 295 470 303L385 308 365 285M385 308L330 385 305 418 240 455 150 485"/>
        </g>
        <path d="M65 220L100 190 200 135 240 125 350 60" fill="none" stroke="#e0607e" stroke-width="7.500"/>
        <path d="M330 40L348 48 360 38 385 42 375 56 380 68 358 62 343 72z" fill="#e0607e" opacity=".85"/><path d="M60 210L85 205 80 225 62 225z" fill="#e0607e"/>
        <g fill="none" stroke="#7079f2" stroke-width="3.500" stroke-dasharray="13 9">
          <path d="M75 580Q90 545 130 548T245 545L270 510Q310 490 380 480T435 500L460 550Q490 570 540 545T640 560L665 590M660 550Q700 530 735 525L715 510M50 565Q80 570 85 610L100 640 135 690 138 760M100 640L60 670M160 725Q260 715 370 725T560 770"/>
        </g>
        <path d="M30 672L75 695 105 712 145 735 160 745M35 685L70 705 100 725 150 750" fill="none" stroke="#6a73ee" stroke-width="9" stroke-dasharray="20 5 8 4"/>
        <g font-family="Open Sans, sans-serif" font-weight="600" font-size="22" fill="#a8204a"><text x="302" y="97">3</text><text x="182" y="144">2</text><text x="88" y="204">1</text><text x="62" y="245">1</text></g>
        ${PEAKS.map(([x, y]) => svg`<path d=${`M${x} ${y - 10}l10 19h-20z`} fill="#cf8248"/>`)}
        <rect x="73" y="455" width="79" height="48" rx="4" fill="#f2d9cf" stroke="#cfa191" stroke-width="3"/>
        <text x="90" y="488" font-family="Noto Sans, sans-serif" font-weight="600" font-size="25" textLength="47" fill="#5f4a48">170</text>
      </g>
    </svg>`;
  }
}

/* ---------- tree ---------- */
type Node = [arrow: string, icon: string, label: string];
const BROWSER: Node[] = [[">", "dir", "C:\\"], [">", "box3d", "GeoPa"], ["", "feather", "Spatia"], ["", "elephant", "PostG"], ["", "mssql", "MSSQ"], ["", "oracle", "Oracle"], ["", "db2", "DB2"], ["", "globeDark", "WMS/"], ["v", "globeDark", "XYZ T"], ["+", "mosaic", "O"], ["", "globeNavy", "WCS"], [">", "wfs", "WFS"], [">", "globeGrid", "OWS"], ["", "arc", "ArcGi"], ["", "arcf", "ArcGi"], ["", "geonode", "GeoN"]];
const TOOLS: Node[] = [[">", "clock", "Viimeksi käytetyt"], ...["Grafiikka", "Interpolointi", "Kartografia", "Rasterianalyysi", "Rasterimuotoinen maastoanalyysi", "Rasterityökalut", "Tasotyökalut", "Tiedostotyökalut", "Tietokanta", "Vektorianalyysi", "Vektorigeometria", "Vektoritaulu", "Vektoritiedon luonti", "Vektoritiedon päällekkäisanalyysit", "Vektoritiedosta poiminta", "Verkostoanalyysi", "Yleiset vektorityökalut"].map((t): Node => [">", "qgis", t]), [">", "plot", "DataPlotly"], [">", "gdal", "GDAL"], [">", "grass", "GRASS"], [">", "triTool", "Qgis2threejs"], [">", "saga", "SAGA"]];
const SIDE = ["addvec", "addras", "addmesh", "addcsv", "addfeather", "addvirt", "addpg v", "addwms v", "addwcs", "addwfs v", "geopack v", "addsat"];
const MENUS = ["Projekti", "_Muokkaa", "_Näytä", "_Tasot", "_Asetukset", "_Lisäosat", "Vekt_ori", "_Rasteri", "_Tietokanta", "_Verkko", "_Mesh", "Prosessointi", "Oh_je"];

@customElement("app-root")
class AppRoot extends LitElement {
  static styles = [shared, css`
    :host { display: flex; flex-direction: column; height: 858px; width: 1600px; position: relative; overflow: hidden; background: #f0f0f0; font: 12.500px "Open Sans", "Noto Sans", sans-serif; letter-spacing: -.2px; color: #1a1a1a; white-space: nowrap; }
    .title { height: 24px; background: #444; border-bottom: 1px solid #222; display: flex; align-items: center; color: #fff; padding-left: 2px; flex: none; }
    .title b { font-weight: 400; margin-left: 4px; flex: 1; }
    .win { display: flex; gap: 33px; padding-right: 18px; }
    .menubar { height: 21px; display: flex; border-bottom: 1px solid #d8d8d8; padding-left: 3px; flex: none; background: #efefef; letter-spacing: -.4px; }
    .menubar span { padding: 0 6px; line-height: 21px; }
    .menubar .on { background: #0078d7; color: #fff; padding: 0 3.500px; margin: 0 3px 0 2.500px; }
    .bar { display: flex; border-bottom: 1px solid #c9c9c9; background: linear-gradient(#fbfbfb, #ececec); flex: none; align-items: center; }
    .b32 { height: 32px; } .b33 { height: 33px; }
    .l1 { width: 522px; } .l2 { width: 514.500px; } .l3 { width: 520px; } .l3b { width: 311px; }
    .l1, .l2, .l3, .l3b { flex: none; height: 100%; }
    .field { background: #fff; border: 1px solid #b4b4b4; border-radius: 2px; height: 18px; display: flex; align-items: center; font-size: 11px; padding-left: 4px; flex: none; letter-spacing: -.1px; }
    .field > span { flex: 1; }
    .dim { background: #efefef; color: #777; }
    .ud { width: 15px; height: 100%; border-left: 1px solid #b4b4b4; display: flex; flex-direction: column; gap: 3px; align-items: center; justify-content: center; }
    .ud::before { content: ""; border: 3.500px solid transparent; border-bottom: 4.500px solid #666; border-top: 0; }
    .ud::after { content: ""; border: 3.500px solid transparent; border-top: 4.500px solid #666; border-bottom: 0; }
    .dn { border: 4px solid transparent; border-top: 5px solid #666; border-bottom: 0; }
    .px { color: #777; } .px .dn { margin-right: 7px; border-top-color: #888; }
    .main { flex: 1; display: flex; min-height: 0; }
    .side { width: 46px; border-right: 1px solid #c4c4c4; background: linear-gradient(90deg, #fbfbfb, #ededed); padding: 5px 0 0 7px; flex: none; }
    .grip { width: 14px; height: 6px; margin-left: 10px; background: radial-gradient(circle at 1px 1px, #bdbdbd .8px, transparent 1px) 0 0 / 3px 3px; }
    .side div.s { height: 26.650px; display: flex; align-items: center; gap: 5px; }
    .side div.s:last-child { padding-left: 6px; }
    .side i { border: 4px solid transparent; border-top: 4.500px solid #444; border-bottom: 0; }
    .docks { width: 277px; flex: none; display: flex; flex-direction: column; border-right: 1px solid #c4c4c4; }
    .head { height: 18px; padding: 0 0 0 3.500px; line-height: 18px; flex: none; letter-spacing: -.35px; }
    .mini { height: 23px; display: flex; align-items: center; gap: 7px; padding: 0 0 3px 6px; flex: none; }
    .tree { background: #fff; border-top: 1px solid #bdbdbd; overflow: hidden; padding-top: 1px; flex: none; letter-spacing: -.4px; }
    .nd { height: 18.320px; display: flex; align-items: center; padding-left: 7px; gap: 6px; }
    .nd > i { width: 8px; flex: none; height: 8px; display: grid; place-items: center; }
    .nd > i.r::before { content: ""; border: 4px solid transparent; border-left: 5px solid #555; border-right: 0; }
    .nd > i.d::before { content: ""; border: 4px solid transparent; border-top: 5px solid #555; border-bottom: 0; }
    .left .nd .ic { margin-left: 3px; }
    .left .nd.kid { background: #f1f1f1; padding-left: 29px; }
    .left { height: 292px; border-bottom: 1px solid #bdbdbd; margin-bottom: 6px; }
    .lay { flex: 1; margin-top: 1px; }
    .lay .nd { font-weight: 700; gap: 4px; }
    .lay .nd.sel { background: #ededed; text-decoration: underline; }
    .cb { width: 14px; height: 14px; border: 1px solid #aaa; background: #fff; flex: none; display: block; }
    .lay .cb { margin-left: 5px; margin-right: 2px; }
    .sw { width: 16px; height: 16px; background: #f4a6b2; border: 1px solid #777; flex: none; margin-right: 1px; }
    .canvas { margin-left: 6px; width: 780px; background: #fff; border: 1px solid #bdbdbd; border-bottom-color: #d0d0d0; position: relative; flex: none; }
    .canvas map-sheet { position: absolute; left: 440px; top: 179px; }
    .proc { flex: 1; margin-left: 6px; display: flex; flex-direction: column; min-width: 0; }
    .proc .head { display: flex; align-items: center; padding-right: 1px; }
    .proc .head b { flex: 1; font-weight: 400; }
    .proc .head svg { margin-left: 2px; margin-bottom: 2px; }
    .find { height: 20px; background: #fff; border: 1px solid #ababab; display: flex; align-items: center; gap: 6px; padding-left: 6px; color: #777; font-size: 11px; flex: none; letter-spacing: 0; }
    .proc .tree { height: 570px; border-left: 1px solid #ababab; border-top: 0; }
    .proc .nd { padding-left: 6px; gap: 7px; }
    .proc .nd .ic { margin-left: 2.500px; margin-right: -.5px; }
    .tabs { display: flex; height: 25px; font-size: 11px; letter-spacing: -.3px; border-top: 1px solid #bdbdbd; flex: none; align-items: flex-start; }
    .tabs span { height: 22px; line-height: 21px; background: #dedede; border: 1px solid #c0c0c0; border-left: 0; border-top: 0; text-align: center; }
    .tabs .on { height: 24px; line-height: 23px; background: #f8f8f8; border-left: 1px solid #c0c0c0; }
    .tabs .t1 { width: 119px; letter-spacing: -.5px; } .tabs .t2 { width: 100px; } .tabs .t3 { width: 131px; } .tabs .t4 { width: 60px; }
    .status { height: 27px; display: flex; align-items: center; font-size: 11px; letter-spacing: -.5px; flex: none; padding: 0 7px 0 3px; }
    .status .q { width: 167px; height: 19px; color: #777; gap: 6px; padding-left: 7px; border-radius: 2px; letter-spacing: 0; }
    .grow { flex: 1; }
    .lb { flex: none; overflow: visible; }
    .vw { position: absolute; left: 122.500px; top: 45px; width: 401px; height: 755px; }
    .pn { position: absolute; left: 523.500px; top: 456.500px; width: 256px; height: 420px; }
    .s1 { width: 60px; } .s2 { width: 98px; padding-left: 8px; } .s3 { width: 53px; } .s4 { width: 77px; } .s4 .dn { margin-right: 8px; } .s5 { width: 54px; } .s6 { width: 78px; margin-right: 7px; } .s7 { width: 35px; } .s8 { width: 74px; margin-right: 5px; } .s9 { width: 38px; margin-left: 5px; letter-spacing: -.1px; } .s10 { width: 69px; margin-left: 4px; letter-spacing: -.25px; }
    .m1 { margin: 0 11px 0 4px; } .m2 { margin: 0 6px 0 10px; } .w75 { width: 75px; margin: 0 2px 0 0; } .w83 { width: 83px; margin-right: 2px; }
  `];
  private tick = svg`<path d="M2 6.500L5 10 10.500 2" fill="none" stroke="#000" stroke-width="2"/>`;
  private node([a, ic, label]: Node, size: number) {
    return html`<div class=${classMap({ nd: true, kid: a === "+" })}><i class=${a === ">" ? "r" : a === "v" ? "d" : ""}></i>${icon(ic, size)}<span>${label}</span></div>`;
  }
  render() {
    return html`
      <div class="title">${icon("qgis", 17)}<b>*Nimetön projekti - QGIS</b>
        <div class="win">
          <svg width="16" height="14" viewBox="0 0 16 14"><path d="M3 7.500h10" stroke="#fff" stroke-width="1.300"/></svg>
          <svg width="16" height="14" viewBox="0 0 16 14"><path d="M3.500 4.500h7v7h-7zM5.500 4V2.500h7v7H11" stroke="#fff" stroke-width="1.300" fill="none"/></svg>
          <svg width="16" height="14" viewBox="0 0 16 14"><path d="M3 2l10 10M13 2L3 12" stroke="#fff" stroke-width="1.300"/></svg>
        </div>
      </div>
      <div class="menubar">${MENUS.map((t) => html`<span class=${t === "_Näytä" ? "on" : ""}>${mnemonic(t)}</span>`)}</div>
      <div class="bar b32">
        <div class="l1"><tool-row items="|| page folder save layout"></tool-row></div>
        <tool-row items="bookmark refresh | -ident -gearq w -select w -invsel w desel -table -abacus *gear sigma measure v bubble textnote v"></tool-row>
      </div>
      <div class="bar b33">
        <div class="l2"><tool-row items="|| layers geopack newshape newspatial"></tool-row></div>
        <tool-row items="-fwd | -tag -diag / tagblue tagred / -tagpin -tageye -tagmove -tagrot -tagedit | plug vd photo dbdown -dbup db | triTool qmsadd qms bino | python earth | help | cross sat poly"></tool-row>
      </div>
      <div class="bar b32">
        <div class="l3"><tool-row items="|| -ruler2 -blob w -blobr"></tool-row></div>
        <tool-row items="w | hist histx -histg -histgx sunup sundn conup condn grid"></tool-row>
        <div class="l3b"></div>
        <tool-row items="| magnet -snapv -snapd"></tool-row>
        <div class="field dim w75"><span>12</span><div class="ud"></div></div>
        <div class="field px w83"><span>px</span><i class="dn"></i></div>
        <tool-row items="topo -xx -xtrace w"></tool-row>
      </div>
      <div class="bar b33"><tool-row items="|| -curve w -circ w -ell"></tool-row></div>
      <div class="main">
        <div class="side"><div class="grip"></div>${SIDE.map((s) => { const [n, v] = s.split(" "); return html`<div class="s">${icon(n, 20)}${v ? html`<i></i>` : nothing}</div>`; })}</div>
        <div class="docks">
          <div class="head">Selain</div>
          <div class="mini">${["newwin", "refresh", "filter"].map((n) => icon(n, 14))}</div>
          <div class="tree left">${BROWSER.map((n) => this.node(n, 16))}</div>
          <div class="head">Tasot</div>
          <div class="mini">${["brush", "group", "eyedrop", "filter"].map((n) => icon(n, 14))}</div>
          <div class="tree lay">
            <div class="nd"><i></i><svg class="cb" viewBox="0 0 13 13">${this.tick}</svg><div class="sw"></div><span>Al</span></div>
            <div class="nd sel"><i class="d"></i><svg class="cb" viewBox="0 0 13 13">${this.tick}</svg>${icon("mosaic", 15)}<span>Op</span></div>
          </div>
        </div>
        <div class="canvas"><map-sheet></map-sheet></div>
        <div class="proc">
          <div class="head"><b>Prosessointityökalut</b>
            <svg width="10" height="10" viewBox="0 0 10 10"><rect x=".5" y=".5" width="9" height="9" rx="2" fill="#ddd" stroke="#666"/><path d="M2.500 4.500h3v3h-3zM4.500 4V2.500h3v3H6" fill="none" stroke="#555" stroke-width=".9"/></svg>
            <svg width="10" height="10" viewBox="0 0 10 10"><rect x=".5" y=".5" width="9" height="9" rx="2" fill="#ddd" stroke="#666"/><path d="M2.800 2.800l4.400 4.400M7.200 2.800L2.800 7.200" stroke="#222" stroke-width="1.400"/></svg>
          </div>
          <div class="mini">${["models", "pyd", "clock", "doc", "|", "inplace", "|", "wrench"].map((n) => n === "|" ? html`<svg width="2" height="12"><path d="M1 0v12" stroke="#c4c4c4"/></svg>` : icon(n, 14))}</div>
          <div class="find">${icon("search", 11)}<span>Etsi...</span></div>
          <div class="tree">${TOOLS.map((n) => this.node(n, 15))}</div>
          <div class="tabs"><span class="on t1">Prosessointityökalut</span><span class="t2">Kuvaustekniikka</span><span class="t3">Tasojen piirtojärjestys</span><span class="t4">Tilastot</span></div>
        </div>
      </div>
      <div class="status">
        <div class="field q">${icon("search", 10)}<span>Etsi (Ctrl+K)</span></div><div class="grow"></div>
        <span class="lb s1">Koordinaatit</span><div class="field s2">375877,6687430</div>
        <div class="m1">${icon("mouse", 16)}</div><span class="lb s3">Mittakaava</span>
        <div class="field s4"><span>1:157662</span><i class="dn"></i></div>
        <div class="m2">${icon("lock", 15)}</div><span class="lb s5">Suurennus</span>
        <div class="field s6"><span>100%</span><div class="ud"></div></div>
        <span class="lb s7">Kierto</span><div class="field s8"><span>0,0 °</span><div class="ud"></div></div>
        <svg class="cb" viewBox="0 0 13 13">${this.tick}</svg><span class="lb s9">Piirrä</span>
        ${icon("crs", 16)}<span class="lb s10">EPSG:3067</span>${icon("msg", 17)}
      </div>
      <drop-menu class="vw" .items=${VIEW}></drop-menu>
      <drop-menu class="pn" checks .items=${PANELS}></drop-menu>`;
  }
}
